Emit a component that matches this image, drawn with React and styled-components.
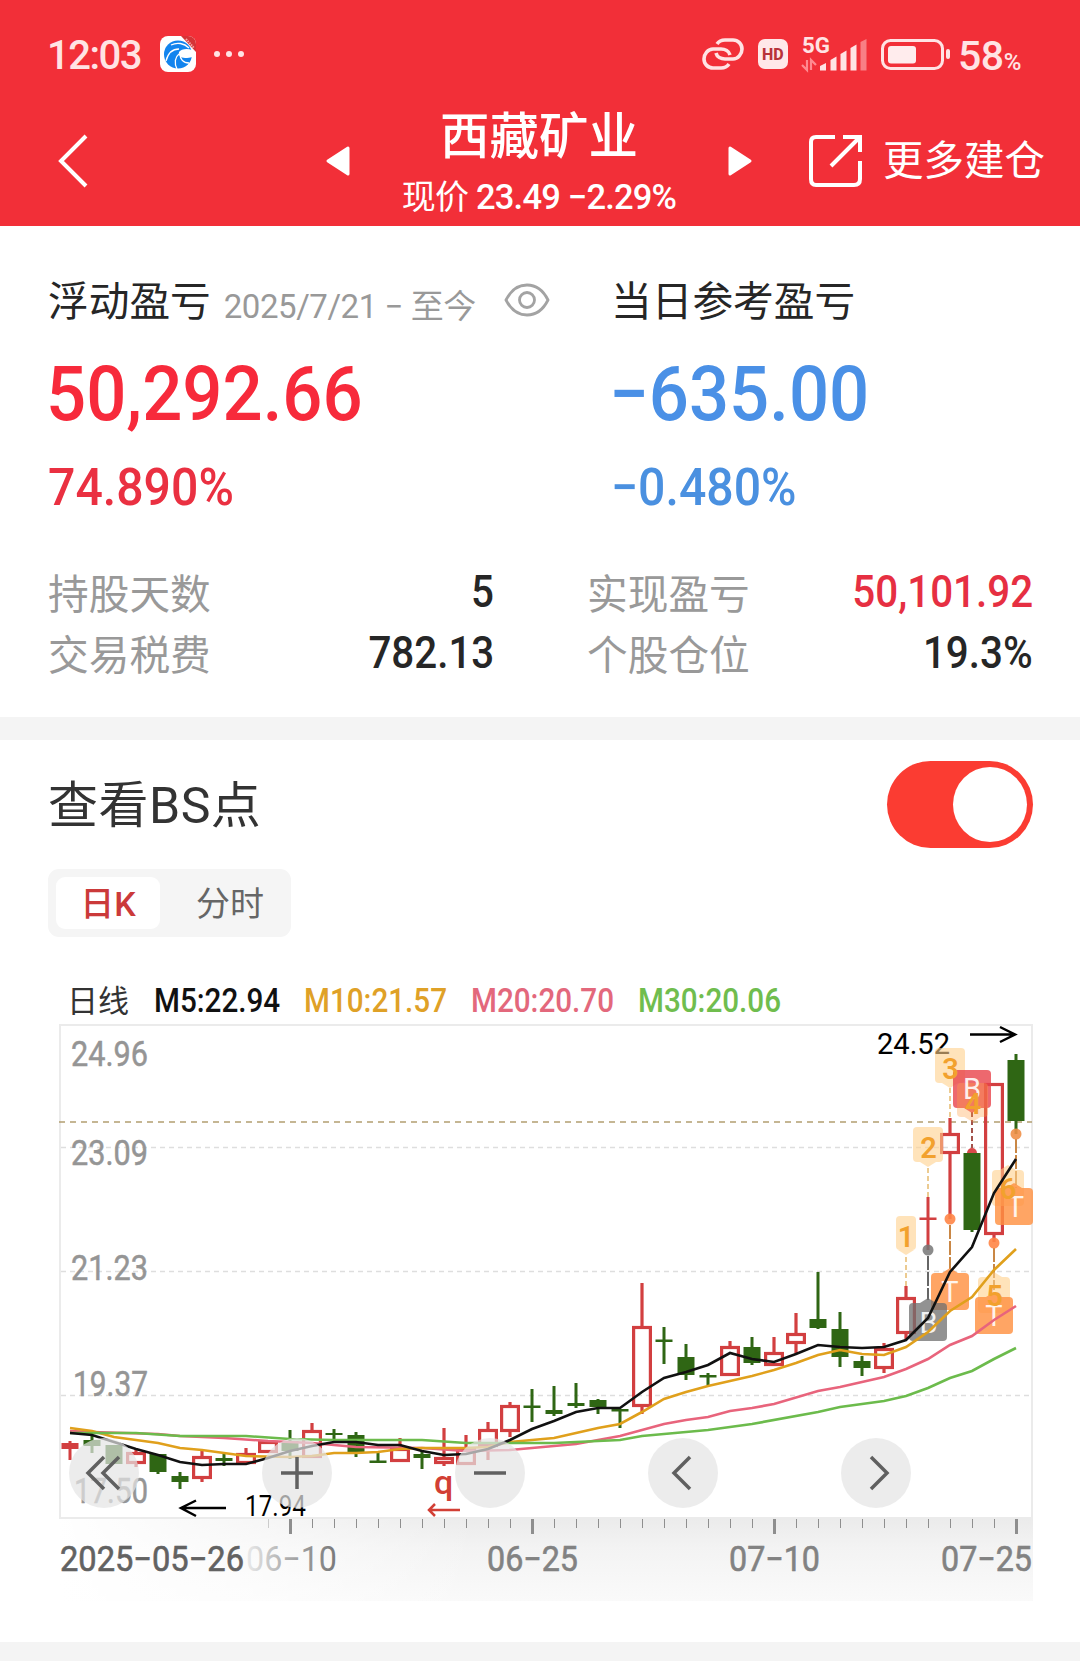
import styled, { createGlobalStyle } from "styled-components";

const GlobalStyle = createGlobalStyle`
  * {
    box-sizing: border-box;
  }

  body {
    margin: 0;
    background: #fff;
    font-family: Roboto, "Noto Sans CJK SC", sans-serif;
    color: #262626;
  }
`;

const Page = styled.div`
  width: 1080px;
  height: 1661px;
  overflow: hidden;
  background: #fff;
`;

const Header = styled.header`
  height: 226px;
  background: #f22f38;
  color: #fff;
`;

const StatusBar = styled.div`
  height: 108px;
  padding: 0 59px 0 47px;
  display: flex;
  align-items: center;
  justify-content: space-between;
  color: #ffe3e4;
`;

const StatusGroup = styled.div`
  display: flex;
  align-items: center;
`;

const Clock = styled.span`
  width: 113px;
  padding-top: 3px;
  font-size: 40px;
  font-weight: 500;
  line-height: 44px;
  letter-spacing: -1.5px;
`;

const Dots = styled.div`
  display: flex;
  gap: 6px;
  margin-left: 18px;

  i {
    width: 6px;
    height: 6px;
    border-radius: 50%;
    background: #ffe3e4;
  }
`;

const HdBadge = styled.span`
  width: 30px;
  height: 30px;
  margin: 0 13px 0 14px;
  border-radius: 7px;
  background: #ffe8e9;
  color: #b8323a;
  font-size: 16px;
  font-weight: 800;
  line-height: 31px;
  text-align: center;
`;

const SignalIcon = styled.svg`
  overflow: visible;
`;

const Battery = styled.div`
  display: flex;
  align-items: baseline;
  margin-left: 7px;
  padding-top: 4px;
  font-size: 41px;
  font-weight: 500;
  line-height: 44px;
  letter-spacing: -0.4px;

  small {
    font-size: 24px;
    margin-left: 0;
    line-height: 1;
  }
`;

const NavBar = styled.div`
  height: 118px;
  padding: 0 35px 0 58px;
  display: grid;
  grid-template-columns: 268px 426px 1fr;
  align-items: center;
`;

const BackIcon = styled.svg`
  margin-bottom: 14px;
`;

const StockSwitch = styled.div`
  display: flex;
  align-items: center;
  justify-content: space-between;
`;

const SwitchArrow = styled.svg`
  margin-bottom: 14px;
`;

const StockTitle = styled.div`
  display: flex;
  flex-direction: column;
  align-items: center;
`;

const StockName = styled.h1`
  margin: 0;
  font-size: 49.5px;
  font-weight: 500;
  line-height: 59px;
`;

const StockPrice = styled.div`
  font-size: 34.5px;
  font-weight: 500;
  line-height: 60px;
  letter-spacing: -0.8px;
  white-space: nowrap;

  span {
    font-size: 34px;
    font-weight: 400;
  }
`;

const MoreButton = styled.div`
  display: flex;
  align-items: center;
  justify-content: flex-end;
  gap: 21px;
  margin-bottom: 13px;
  font-size: 40.5px;
  line-height: 56px;
  white-space: nowrap;
`;

const Summary = styled.section`
  height: 491px;
  padding: 41px 48px 0;
`;

const Profits = styled.div`
  display: grid;
  grid-template-columns: 563px 1fr;
`;

const ProfitTitle = styled.div`
  display: flex;
  align-items: center;
  height: 62px;
  font-size: 40.7px;
  white-space: nowrap;
`;

const Period = styled.span`
  margin: 12px 28px 0 13px;
  font-size: 33px;
  letter-spacing: -0.45px;
  color: #999;

  & + svg {
    margin-top: 4px;
  }
`;

const Amount = styled.div`
  height: 92px;
  margin-top: 19px;
  font-size: 76px;
  font-weight: 500;
  line-height: 92px;
  color: ${(props) => props.$color};
  transform: translateX(-2px) scaleX(0.93);
  transform-origin: left;
`;

const Percent = styled.div`
  margin-top: 13px;
  height: 70px;
  font-size: 51.5px;
  font-weight: 500;
  line-height: 70px;
  color: ${(props) => props.$color};
  transform: scaleX(0.936);
  transform-origin: left;
`;

const Details = styled.div`
  display: grid;
  grid-template-columns: 444px 444px;
  column-gap: 95px;
  margin-top: 38px;
`;

const DetailRow = styled.div`
  height: 61px;
  display: flex;
  align-items: center;
  justify-content: space-between;
`;

const DetailLabel = styled.span`
  font-size: 40.7px;
  color: #999;
`;

const DetailValue = styled.span`
  font-size: 44px;
  font-weight: 500;
  color: ${(props) => props.$color || "#262626"};
  transform: translateX(2px) scaleX(0.917);
  transform-origin: right;
`;

const Divider = styled.div`
  height: 23px;
  background: #f4f4f4;
`;

const ChartSection = styled.section`
  height: 902px;
  padding: 21px 47px 0 48px;
`;

const SectionHeader = styled.div`
  display: flex;
  align-items: center;
  justify-content: space-between;
  height: 87px;
`;

const SectionTitle = styled.h2`
  margin: 3px 0 0;
  font-size: 50px;
  font-weight: 400;
  line-height: 87px;
  letter-spacing: 0.5px;
  color: #333;
`;

const Toggle = styled.div`
  width: 146px;
  height: 87px;
  padding: 6px;
  border-radius: 44px;
  background: #fb3c32;
  display: flex;
  justify-content: flex-end;

  span {
    width: 74px;
    height: 75px;
    border-radius: 50%;
    background: #fff;
  }
`;

const Tabs = styled.div`
  width: 243px;
  height: 68px;
  margin-top: 21px;
  padding: 8px;
  display: flex;
  border-radius: 11px;
  background: #f5f5f5;
`;

const Tab = styled.div`
  width: ${(props) => (props.$active ? 104 : 123)}px;
  height: 52px;
  padding-left: ${(props) => (props.$active ? 0 : 17)}px;
  border-radius: 9px;
  background: ${(props) => (props.$active ? "#fff" : "transparent")};
  color: ${(props) => (props.$active ? "#cb3a3a" : "#666")};
  font-size: 34px;
  font-weight: ${(props) => (props.$active ? 500 : 400)};
  line-height: 54px;
  text-align: center;
`;

const Legend = styled.div`
  display: flex;
  align-items: center;
  height: 52px;
  margin-top: 35px;
  padding: 4px 0 0 19px;
  font-size: 33px;
  font-weight: 500;
  white-space: nowrap;
`;

const LegendItem = styled.span`
  width: ${(props) => props.$width}px;
  color: ${(props) => props.$color};
  transform: scaleX(0.898);
  transform-origin: left;
`;

const LegendTitle = styled.span`
  width: 87px;
  margin-bottom: 3px;
  font-size: 31px;
  font-weight: 400;
  color: #333;
`;

const ChartWrap = styled.div`
  position: relative;
  width: 974px;
  height: 577px;
  margin-left: 11px;

  & > svg {
    display: block;
  }
`;

const Controls = styled.div`
  position: absolute;
  left: 10px;
  top: 414px;
  display: flex;
  gap: 123px;
`;

const RoundButton = styled.div`
  width: 70px;
  height: 70px;
  border-radius: 50%;
  background: rgba(228, 228, 228, 0.71);
  display: flex;
  align-items: center;
  justify-content: center;
`;

const RED = "#d23f40";
const GREEN = "#2f6614";

// [type, body top, body bottom, wick top, wick bottom]
// r = hollow rise, f = filled rise, g = fall
const candles = [
  ["f", 1443, 1449, 1441, 1460],
  ["g", 1440, 1446, 1435, 1453],
  ["g", 1445, 1464, 1445, 1464],
  ["r", 1452, 1464, 1448, 1467],
  ["g", 1454, 1472, 1454, 1474],
  ["g", 1476, 1482, 1472, 1489],
  ["r", 1456, 1479, 1451, 1482],
  ["g", 1458, 1461, 1452, 1466],
  ["r", 1453, 1464, 1448, 1464],
  ["r", 1441, 1453, 1441, 1453],
  ["g", 1441, 1451, 1430, 1459],
  ["r", 1430, 1458, 1423, 1458],
  ["g", 1433, 1435, 1429, 1440],
  ["g", 1435, 1452, 1432, 1457],
  ["g", 1460.5, 1463, 1453, 1463],
  ["r", 1448, 1462, 1438, 1462],
  ["g", 1454, 1458, 1451, 1469],
  ["r", 1457, 1464, 1428, 1466],
  ["r", 1448, 1465, 1435, 1465],
  ["r", 1429, 1447, 1422, 1460],
  ["r", 1405, 1432, 1402, 1437],
  ["g", 1405.5, 1408, 1389, 1422],
  ["g", 1410, 1414, 1386, 1416],
  ["g", 1403, 1406, 1383, 1408],
  ["g", 1400, 1407, 1399, 1414],
  ["g", 1409, 1411.5, 1409, 1428],
  ["r", 1326, 1407, 1283, 1414],
  ["g", 1339.5, 1342, 1327, 1364],
  ["g", 1357, 1375, 1344, 1380],
  ["g", 1375, 1377.5, 1373, 1385],
  ["r", 1346, 1376, 1341, 1376],
  ["g", 1347, 1363, 1337, 1365],
  ["r", 1352, 1366, 1337, 1366],
  ["r", 1333, 1344, 1313, 1353],
  ["g", 1319, 1328, 1272, 1329],
  ["g", 1329, 1357, 1312, 1367],
  ["g", 1361, 1368, 1356, 1376],
  ["r", 1348, 1369, 1343, 1373],
  ["r", 1297, 1334, 1286, 1339],
  ["f", 1217.5, 1220, 1197, 1250],
  ["r", 1133, 1154, 1118, 1219],
  ["g", 1153, 1230, 1152, 1232],
  ["r", 1083, 1235, 1083, 1242],
  ["g", 1060, 1121, 1054, 1134],
];

const averages = [
  {
    color: "#e8647c",
    points:
      "70,1431 92,1432 158,1434 180,1436 224,1438 268,1441 312,1443 356,1447 422,1448 466,1451 510,1450 532,1448 576,1444 620,1436 664,1424 686,1420 708,1417 730,1411 752,1408 774,1404 818,1391 840,1387 884,1377 906,1369 928,1359 950,1345 972,1336 994,1320 1016,1306",
  },
  {
    color: "#e0a01c",
    points:
      "70,1428 92,1431 114,1437 136,1440 158,1443 180,1448 202,1450 224,1453 246,1456 290,1457 312,1456 334,1453 356,1453 378,1452 400,1449 422,1448 466,1448 488,1447 510,1442 532,1440 554,1438 576,1433 598,1428 620,1424 642,1412 664,1399 686,1392 708,1386 730,1381 752,1376 774,1370 796,1363 818,1355 840,1350 862,1354 884,1355 906,1347 928,1332 950,1311 972,1297 994,1270 1016,1249",
  },
  {
    color: "#6cbb4c",
    points:
      "70,1433 136,1433 180,1436 246,1436 290,1439 334,1440 422,1440 466,1443 554,1443 620,1440 642,1436 708,1430 752,1424 818,1412 840,1407 884,1401 906,1396 928,1388 950,1378 972,1371 994,1359 1016,1348",
  },
  {
    color: "#111",
    points:
      "70,1433 92,1435 114,1442 136,1449 158,1455 180,1462 202,1465 224,1464 246,1464 268,1458 290,1451 312,1446 334,1442 356,1442 378,1445 400,1445 422,1451 444,1455 466,1454 488,1449 510,1440 532,1429 554,1421 576,1412 598,1408 620,1408 642,1392 664,1378 686,1372 708,1365 730,1353 752,1359 774,1362 796,1354 818,1345 840,1347 862,1348 884,1347 906,1340 928,1318 950,1272 972,1247 994,1193 1016,1159",
  },
];

const priceLabels = [
  ["24.96", 1066, 71],
  ["23.09", 1164.5, 71],
  ["21.23", 1280, 71],
  ["19.37", 1396, 73],
  ["17.50", 1503, 74],
];

const dateLabels = [
  ["06−25", 487],
  ["07−10", 729],
  ["07−25", 941],
];

const ticks = Array.from({ length: 35 }, (_, i) => 268 + i * 22);

function Candle({ x, data }) {
  const [type, top, bottom, high, low] = data;
  const color = type === "g" ? GREEN : RED;
  if (type === "r") {
    return (
      <g stroke={color} strokeWidth="3.2" fill="none">
        <path d={`M${x} ${high}V${top}M${x} ${bottom}V${low}`} />
        <rect x={x - 8.4} y={top + 1.5} width="16.8" height={bottom - top - 3} />
      </g>
    );
  }
  return (
    <g fill={color}>
      <rect x={x - 1.5} y={high} width="3" height={low - high} />
      <rect x={x - 8.5} y={top} width="17" height={bottom - top} />
    </g>
  );
}

function Pin({ x, y, width, height, fill, tip }) {
  const center = x + width / 2;
  const edge = tip === "up" ? y : y + height;
  const point = tip === "up" ? y - 5 : y + height + 5;
  return (
    <g fill={fill}>
      <rect x={x} y={y} width={width} height={height} rx="4" />
      <path d={`M${center - 8} ${edge}L${center} ${point}L${center + 8} ${edge}z`} />
    </g>
  );
}

function Marks() {
  const pale = "rgba(255,208,140,.6)";
  const orange = "rgba(255,145,66,.82)";
  return (
    <g fontFamily="Roboto, sans-serif" textAnchor="middle">
      <g fill="none" strokeWidth="2" strokeDasharray="5 3">
        <path d="M906 1257V1286M928 1168V1197M950 1088V1118" stroke="#eccb91" />
        <path d="M950 1225V1269M994 1248V1290M1016 1139V1188" stroke="#c98745" strokeDasharray="14 2" />
        <path d="M928 1256V1300" stroke="#666" strokeDasharray="14 2" />
        <path d="M972 1112V1148" stroke="#a3524a" />
      </g>
      <circle cx="928" cy="1250" r="5.5" fill="#777" opacity=".85" />
      <circle cx="950" cy="1219" r="5.5" fill="#ff8546" opacity=".9" />
      <circle cx="994" cy="1243" r="5.5" fill="#ff8546" opacity=".9" />
      <circle cx="1016" cy="1134" r="5.5" fill="#f09048" opacity=".9" />
      <path d="M967 1153a5 5 0 0 1 10 0z" fill="#d94a4a" />

      <Pin x={896} y={1216} width={20} height={34} fill={pale} tip="down" />
      <Pin x={913} y={1127} width={30} height={35} fill={pale} tip="down" />
      <Pin x={935} y={1048} width={30} height={35} fill={pale} tip="down" />
      <Pin x={953} y={1070} width={38} height={38} fill="rgba(232,66,74,.8)" tip="down" />
      <Pin x={957} y={1083} width={31} height={34} fill="rgba(255,160,70,.35)" tip="down" />
      <Pin x={992} y={1170} width={32} height={36} fill={pale} tip="up" />
      <Pin x={995} y={1188} width={38} height={37} fill={orange} tip="up" />
      <Pin x={931} y={1273} width={38} height={37} fill={orange} tip="up" />
      <Pin x={978} y={1277} width={32} height={36} fill={pale} tip="up" />
      <Pin x={975} y={1297} width={38} height={37} fill={orange} tip="up" />
      <Pin x={909} y={1303} width={38} height={38} fill="rgba(112,112,112,.76)" tip="up" />

      <g fill="#fff" fontSize="29" opacity=".88">
        <text x="972" y="1099">B</text>
        <text x="928.5" y="1333">B</text>
        <text x="950" y="1302">T</text>
        <text x="994" y="1326">T</text>
        <text x="1015.5" y="1217">T</text>
      </g>
      <g fill="#f2a12d" fontSize="29" fontWeight="600">
        <text x="906" y="1247">1</text>
        <text x="928.5" y="1158">2</text>
        <text x="950.5" y="1079">3</text>
        <text x="973" y="1114">4</text>
        <text x="994.5" y="1306">5</text>
        <text x="1008" y="1199">6</text>
      </g>
    </g>
  );
}

function KLineChart() {
  return (
    <svg width="974" height="577" viewBox="59 1024 974 577" fontFamily="Roboto, sans-serif">
      <defs>
        <linearGradient id="axisShade" x1="0" y1="0" x2="0" y2="1">
          <stop offset="0" stopColor="#ebebeb" />
          <stop offset=".35" stopColor="#f3f3f3" />
          <stop offset="1" stopColor="#fafafa" />
        </linearGradient>
        <linearGradient id="axisFade" x1="0" y1="0" x2="1" y2="0">
          <stop offset="0" stopColor="#fff" />
          <stop offset=".5" stopColor="#fff" stopOpacity=".55" />
          <stop offset="1" stopColor="#fff" stopOpacity="0" />
        </linearGradient>
        <linearGradient id="dateFade" gradientUnits="userSpaceOnUse" x1="244" y1="0" x2="334" y2="0">
          <stop offset="0" stopColor="#eee" />
          <stop offset=".45" stopColor="#b0b0b0" />
          <stop offset="1" stopColor="#7c7c7c" />
        </linearGradient>
      </defs>

      <rect x="59" y="1519" width="974" height="82" fill="url(#axisShade)" />
      <rect x="59" y="1519" width="420" height="82" fill="url(#axisFade)" />
      <rect x="60" y="1025" width="972" height="493" fill="#fff" stroke="#ebebeb" strokeWidth="2" />

      <path d="M61 1147.500H1031M61 1271.500H1031M61 1395.500H1031" stroke="#dedede" strokeWidth="1.3" strokeDasharray="5 4" />
      <path d="M59 1122H1032" stroke="#b39f70" strokeWidth="1.6" strokeDasharray="6 5" />

      <g fill="#959595" stroke="#959595" strokeWidth=".5" fontSize="34.5">
        {priceLabels.map(([label, y, x]) => (
          <text key={label} x={x} y={y} textLength={148 - x} lengthAdjust="spacingAndGlyphs">
            {label}
          </text>
        ))}
      </g>

      <g fill="#000" fontSize="29.5">
        <text x="877" y="1053.500" textLength="73" lengthAdjust="spacingAndGlyphs">24.52</text>
        <text x="245" y="1515.500" textLength="61" lengthAdjust="spacingAndGlyphs">17.94</text>
      </g>
      <path
        d="M970 1034.500H1015M1000 1027L1015 1034.500L1000 1042M226 1508H181M196 1500.500L181 1508L196 1516"
        fill="none"
        stroke="#000"
        strokeWidth="2.5"
      />

      {candles.map((data, i) => (
        <Candle key={i} x={70 + i * 22} data={data} />
      ))}
      <Marks />
      {averages.map((line) => (
        <polyline key={line.color} points={line.points} fill="none" stroke={line.color} strokeWidth="2.6" />
      ))}

      <text x="443.500" y="1494" fill="#d23f35" fontSize="34" fontWeight="500" textAnchor="middle">q</text>
      <path d="M460 1510H429M435 1504L429 1510L435 1516" fill="none" stroke="#d23f35" strokeWidth="2.5" />

      {ticks.map((x) => {
        const major = (x - 290) % 242 === 0;
        return (
          <rect
            key={x}
            x={major ? x - 1 : x}
            y="1519"
            width={major ? 3 : 1}
            height={major ? 15 : 9}
            fill={x === 268 ? "#ccc" : "#8e8e8e"}
          />
        );
      })}

      <g fontSize="35" fill="#828282" stroke="#828282" strokeWidth=".6">
        <text x="60" y="1571" fill="#626262" stroke="#626262" textLength="184" lengthAdjust="spacingAndGlyphs">2025−05−26</text>
        <text x="246" y="1571" fill="url(#dateFade)" stroke="none" textLength="91" lengthAdjust="spacingAndGlyphs">06−10</text>
        {dateLabels.map(([label, x]) => (
          <text key={label} x={x} y="1571" textLength="91" lengthAdjust="spacingAndGlyphs">
            {label}
          </text>
        ))}
      </g>
    </svg>
  );
}

function ControlIcon({ d }) {
  return (
    <svg width="40" height="40" viewBox="-20 -20 40 40" fill="none" stroke="#606060" strokeWidth="3.5">
      <path d={d} />
    </svg>
  );
}

function AppLogo() {
  return (
    <svg width="36" height="36" viewBox="0 0 36 36">
      <rect width="36" height="36" rx="8" fill="#fff" />
      <circle cx="18" cy="18.500" r="14" fill="#1284ee" />
      <path d="M19 16c2-3 8-4 13-2l1 7c-2 0-3 1-6 1-5 0-9-1-8-6z" fill="#fff" />
      <path d="M6 25c2-8 6-12 13-12M17 33c-3-6-2-12 2-15M29 27c-6 0-9-4-9-9M11 9c6-3 13-2 18 3" fill="none" stroke="#fff" strokeWidth="1.3" />
      <path d="M21 0h7a8 8 0 0 1 8 8v8z" fill="#d63337" />
      <path d="M26 3l8 9" stroke="#f3a8a8" strokeWidth="2" strokeDasharray="1.5 1" />
    </svg>
  );
}

function StatusIcons() {
  return (
    <>
      <svg width="42" height="34" viewBox="0 0 42 34" fill="none" stroke="#ffe3e4" strokeWidth="3.6">
        <path d="M15 7c2-3 5-4 8-4h8c5 0 9 4 9 9s-4 10-9 10h-8c-4 0-8-2-9-6" />
        <path d="M27 27c-2 3-5 4-8 4h-8c-5 0-9-4-9-9s4-10 9-10h8c4 0 8 2 9 6" />
      </svg>
      <HdBadge>HD</HdBadge>
      <SignalIcon width="68" height="36" viewBox="0 0 68 36" fill="#ffe3e4">
        <text x="1" y="17" fontSize="22" fontWeight="700" fontFamily="Roboto, sans-serif" textLength="28" lengthAdjust="spacingAndGlyphs">5G</text>
        <path d="M6 24v10l-5-5M10 34V24l5 5" fill="none" stroke="#ff8a90" strokeWidth="2.2" />
        <path d="M19 30l6-3v7.500h-6zM29.500 24l6-3.500v14h-6zM39.500 18l6-3.500v20h-6zM49.500 12l6-3.500v26h-6z" />
        <path d="M59.500 6l6-3v31.500h-6z" opacity=".45" />
      </SignalIcon>
      <svg width="82" height="32" viewBox="-12 0 82 32">
        <rect x="1.500" y="2.500" width="60" height="28" rx="8" fill="none" stroke="#ffe3e4" strokeWidth="3" />
        <rect x="7" y="8" width="28" height="17.500" rx="3" fill="#ffeced" />
        <rect x="65" y="11" width="4" height="10" rx="2" fill="#ffe3e4" />
      </svg>
    </>
  );
}

export default function App() {
  return (
    <Page>
      <GlobalStyle />
      <Header>
        <StatusBar>
          <StatusGroup>
            <Clock>12:03</Clock>
            <AppLogo />
            <Dots>
              <i />
              <i />
              <i />
            </Dots>
          </StatusGroup>
          <StatusGroup>
            <StatusIcons />
            <Battery>
              58<small>%</small>
            </Battery>
          </StatusGroup>
        </StatusBar>
        <NavBar>
          <BackIcon width="32" height="56" viewBox="0 0 32 56" fill="none" stroke="#fff" strokeWidth="4">
            <path d="M28 3L3 28L28 53" />
          </BackIcon>
          <StockSwitch>
            <SwitchArrow width="24" height="30" viewBox="0 0 24 30" fill="#fff" stroke="#fff" strokeWidth="3" strokeLinejoin="round">
              <path d="M22 2v26L2 15z" />
            </SwitchArrow>
            <StockTitle>
              <StockName>西藏矿业</StockName>
              <StockPrice>
                <span>现价</span> 23.49 −2.29%
              </StockPrice>
            </StockTitle>
            <SwitchArrow width="24" height="30" viewBox="0 0 24 30" fill="#fff" stroke="#fff" strokeWidth="3" strokeLinejoin="round">
              <path d="M2 2v26l20-13z" />
            </SwitchArrow>
          </StockSwitch>
          <MoreButton>
            <svg width="54" height="54" viewBox="0 0 54 54" fill="none" stroke="#fff" strokeWidth="4">
              <path d="M27 3H8q-5 0-5 5v37q0 6 5 6h38q6 0 6-6V27M35 3h17v15M51 4L23 32" />
            </svg>
            更多建仓
          </MoreButton>
        </NavBar>
      </Header>

      <Summary>
        <Profits>
          <div>
            <ProfitTitle>
              浮动盈亏
              <Period>2025/7/21 − 至今</Period>
              <svg width="46" height="34" viewBox="0 0 46 34" fill="none" stroke="#a3a3a3" strokeWidth="2.8">
                <path d="M2 17C12-3 34-3 44 17C34 37 12 37 2 17z" />
                <circle cx="23" cy="17" r="7.500" />
              </svg>
            </ProfitTitle>
            <Amount $color="#f72a3b">50,292.66</Amount>
            <Percent $color="#ea3041">74.890%</Percent>
          </div>
          <div>
            <ProfitTitle>当日参考盈亏</ProfitTitle>
            <Amount $color="#4a90e6">−635.00</Amount>
            <Percent $color="#4a90e0">−0.480%</Percent>
          </div>
        </Profits>
        <Details>
          <DetailRow>
            <DetailLabel>持股天数</DetailLabel>
            <DetailValue>5</DetailValue>
          </DetailRow>
          <DetailRow>
            <DetailLabel>实现盈亏</DetailLabel>
            <DetailValue $color="#e62f42">50,101.92</DetailValue>
          </DetailRow>
          <DetailRow>
            <DetailLabel>交易税费</DetailLabel>
            <DetailValue>782.13</DetailValue>
          </DetailRow>
          <DetailRow>
            <DetailLabel>个股仓位</DetailLabel>
            <DetailValue>19.3%</DetailValue>
          </DetailRow>
        </Details>
      </Summary>
      <Divider />

      <ChartSection>
        <SectionHeader>
          <SectionTitle>查看BS点</SectionTitle>
          <Toggle>
            <span />
          </Toggle>
        </SectionHeader>
        <Tabs>
          <Tab $active>日K</Tab>
          <Tab>分时</Tab>
        </Tabs>
        <Legend>
          <LegendTitle>日线</LegendTitle>
          <LegendItem $width={150} $color="#111">M5:22.94</LegendItem>
          <LegendItem $width={167} $color="#dfa127">M10:21.57</LegendItem>
          <LegendItem $width={167} $color="#e3687c">M20:20.70</LegendItem>
          <LegendItem $width={167} $color="#70bd4e">M30:20.06</LegendItem>
        </Legend>
        <ChartWrap>
          <KLineChart />
          <Controls>
            <RoundButton>
              <ControlIcon d="M0 -16L-16 0L0 16M15 -16L-1 0L15 16" />
            </RoundButton>
            <RoundButton>
              <ControlIcon d="M-16 0H16M0 -16V16" />
            </RoundButton>
            <RoundButton>
              <ControlIcon d="M-16 0H16" />
            </RoundButton>
            <RoundButton>
              <ControlIcon d="M7 -16L-9 0L7 16" />
            </RoundButton>
            <RoundButton>
              <ControlIcon d="M-5 -16L11 0L-5 16" />
            </RoundButton>
          </Controls>
        </ChartWrap>
      </ChartSection>
      <Divider />
    </Page>
  );
}
